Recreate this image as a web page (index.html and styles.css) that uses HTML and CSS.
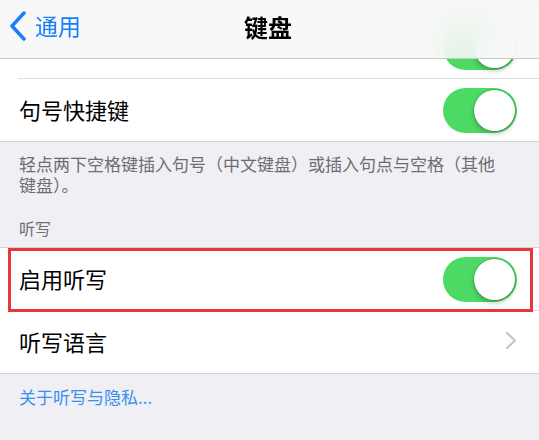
FILE: index.html
```html
<!DOCTYPE html>
<html lang="zh-CN">
<head>
<meta charset="utf-8">
<title>键盘</title>
<link rel="stylesheet" href="styles.css">
</head>
<body>
<header class="navbar">
  <div class="nav-back">
    <svg class="back-icon" width="18" height="30" viewBox="0 0 18 30"><path d="M15 2 L3 15 L15 28" fill="none" stroke="#157efb" stroke-width="3.4" stroke-linecap="round" stroke-linejoin="round"/></svg>
    <span class="back-label">通用</span>
  </div>
  <div class="nav-title">键盘</div>
</header>
<main class="page">
  <section class="group">
    <div class="row row-sep">
      <span class="row-label"></span>
      <span class="toggle"><span class="knob"></span></span>
    </div>
    <div class="row">
      <span class="row-label">句号快捷键</span>
      <span class="toggle"><span class="knob"></span></span>
    </div>
  </section>
  <p class="footer-note">轻点两下空格键插入句号（中文键盘）或插入句点与空格（其他键盘）。</p>
  <h2 class="section-header">听写</h2>
  <section class="group group-top">
    <div class="row row-sep highlighted">
      <span class="row-label">启用听写</span>
      <span class="toggle"><span class="knob"></span></span>
    </div>
    <div class="row">
      <span class="row-label">听写语言</span>
      <svg class="chevron" width="13" height="19" viewBox="0 0 13 19"><path d="M2 2 L10 9.5 L2 17" fill="none" stroke="#c4c4c9" stroke-width="2.2" stroke-linecap="round" stroke-linejoin="round"/></svg>
    </div>
  </section>
  <p class="footer-link">关于听写与隐私...</p>
</main>
</body>
</html>
```

FILE: styles.css
```css
html, body {
  margin: 0;
  padding: 0;
}
body {
  width: 539px;
  height: 440px;
  overflow: hidden;
  background: #efeff4;
  font-family: "Noto Sans CJK SC", "Noto Sans", sans-serif;
}
.navbar {
  position: fixed;
  top: 0;
  left: 0;
  right: 0;
  height: 58px;
  display: flex;
  align-items: center;
  justify-content: center;
  background: rgba(247, 247, 247, 0.86);
  backdrop-filter: blur(14px);
  -webkit-backdrop-filter: blur(14px);
  border-bottom: 1px solid #c9c9cc;
  z-index: 5;
}
.nav-back {
  position: absolute;
  left: 9px;
  top: 11px;
  display: flex;
  align-items: center;
  gap: 8px;
}
.back-icon {
  display: block;
}
.back-label {
  color: #157efb;
  font-size: 23px;
  line-height: 30px;
  margin-top: -2px;
}
.nav-title {
  font-size: 24px;
  font-weight: 700;
  color: #000;
  line-height: 30px;
  margin-left: -3px;
  margin-top: -5px;
}
.page {
  padding-top: 16px;
}
.group {
  background: #fff;
  border-bottom: 1px solid #d3d3d6;
}
.group-top {
  border-top: 1px solid #d3d3d6;
}
.row {
  height: 62px;
  display: flex;
  align-items: center;
  justify-content: space-between;
  padding: 0 22px 0 19px;
  position: relative;
}
.row-sep::before {
  content: "";
  position: absolute;
  left: 18px;
  right: 0;
  bottom: -1px;
  border-bottom: 1px solid #dcdcdf;
}
.row-sep {
  margin-bottom: 1px;
}
.row-label {
  font-size: 22px;
  color: #000;
  line-height: 30px;
  margin-top: -3px;
}
.toggle {
  width: 74px;
  height: 45px;
  border-radius: 23px;
  background: #4cd964;
  display: flex;
  align-items: center;
  justify-content: flex-end;
  padding: 0 2px;
  box-sizing: border-box;
}
.knob {
  width: 41px;
  height: 41px;
  border-radius: 50%;
  background: #fff;
  box-shadow: 0 3px 5px rgba(0, 0, 0, 0.22), 0 0 0 1px rgba(40, 140, 60, 0.35);
}
.chevron {
  display: block;
  margin-right: -1px;
  margin-top: -4px;
}
.footer-note {
  margin: 0;
  padding: 11px 40px 0 19px;
  font-size: 17px;
  line-height: 21px;
  color: #6d6d72;
}
.section-header {
  margin: 23px 0 0;
  padding: 0 19px 8px;
  font-size: 16px;
  font-weight: 400;
  line-height: 21px;
  color: #6d6d72;
}
.highlighted::after {
  content: "";
  position: absolute;
  left: 8px;
  right: 6px;
  top: 0;
  bottom: -2px;
  border: 3px solid #e8373c;
  pointer-events: none;
}
.footer-link {
  margin: 0;
  padding: 12px 19px 0;
  font-size: 17px;
  line-height: 21px;
  color: #3a8ef0;
}
```
